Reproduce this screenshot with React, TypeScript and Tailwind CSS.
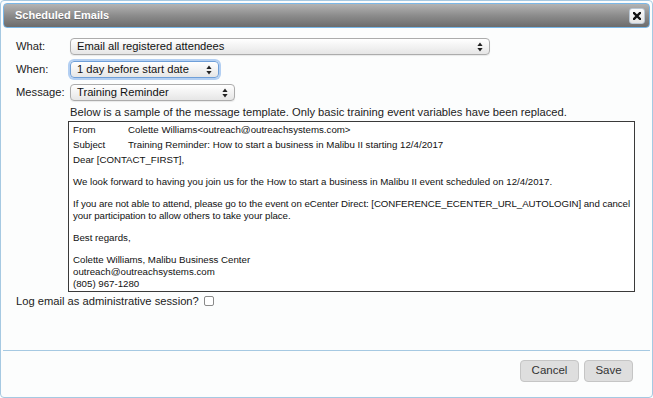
const font = { fontFamily: '"Liberation Sans", Arial, sans-serif' };

const Arrows = () => (
  <svg width="6" height="10" viewBox="0 0 6 10" className="shrink-0">
    <path d="M3 0.5 L5.6 4 L0.4 4 Z" fill="#222" />
    <path d="M3 9.5 L5.6 6 L0.4 6 Z" fill="#222" />
  </svg>
);

const FakeSelect = ({ value, width, focused }: { value: string; width: string; focused?: boolean }) => (
  <div
    className={`${width} h-[17px] flex items-center justify-between pl-[6px] pr-[6px] rounded-[4px] border text-[11.2px] text-[#111] bg-gradient-to-b from-[#ffffff] to-[#e6e6e6] ${
      focused
        ? "border-[#6f9fd8] shadow-[0_0_0_2px_#b3cff2]"
        : "border-[#acacac] shadow-[0_1px_1px_rgba(0,0,0,0.08)]"
    }`}
  >
    <span className="leading-none">{value}</span>
    <Arrows />
  </div>
);

export default function App() {
  return (
    <div className="w-[653px] h-[398px] bg-white" style={font}>
      <div className="h-full flex flex-col border border-[#a6c9e2] rounded-[4px] bg-[#fcfdfd] p-[2px]">
        {/* title bar */}
        <div className="h-[25px] shrink-0 flex items-center justify-between rounded-[4px] border border-[#79b7e7] bg-gradient-to-b from-[#b4b4b4] via-[#8c8c8c] to-[#6c6c6c] pl-[11px] pr-[4px]">
          <span className="text-[11px] font-bold text-white [text-shadow:0_1px_0_rgba(0,0,0,0.25)]">
            Scheduled Emails
          </span>
          <div className="w-[16px] h-[16px] flex items-center justify-center rounded-[3px] border border-[#b9c6d3] bg-gradient-to-b from-[#fbfbfb] to-[#e4e4e4]">
            <svg width="8" height="8" viewBox="0 0 8 8">
              <path d="M1 1 L7 7 M7 1 L1 7" stroke="#111" strokeWidth="2.4" strokeLinecap="square" />
            </svg>
          </div>
        </div>

        {/* content */}
        <div className="flex-1 pt-[10px] pl-[13px] text-[#222]">
          <div className="grid grid-cols-[54px_1fr] gap-y-[6px] items-center text-[11.2px]">
            <span>What:</span>
            <FakeSelect value="Email all registered attendees" width="w-[420px]" />
            <span>When:</span>
            <FakeSelect value="1 day before start date" width="w-[149px]" focused />
            <span>Message:</span>
            <FakeSelect value="Training Reminder" width="w-[165px]" />
          </div>

          <div className="pl-[54px] mt-[4px] text-[11.2px] leading-[14px]">
            Below is a sample of the message template. Only basic training event variables have been replaced.
          </div>

          <div className="ml-[52px] mt-[2px] w-[567px] h-[171px] border border-[#3a3a3a] bg-white pl-[4px] pt-[1px] text-[9.7px] text-[#111] overflow-hidden">
            <div className="flex h-[15px] items-center">
              <span className="w-[55px]">From</span>
              <span>Colette Williams&lt;outreach@outreachsystems.com&gt;</span>
            </div>
            <div className="flex h-[15px] items-center">
              <span className="w-[55px]">Subject</span>
              <span>Training Reminder: How to start a business in Malibu II starting 12/4/2017</span>
            </div>
            <div className="leading-[12px] mt-[1px]">
              <p>Dear [CONTACT_FIRST],</p>
              <p className="mt-[10px]">
                We look forward to having you join us for the How to start a business in Malibu II event scheduled on 12/4/2017.
              </p>
              <p className="mt-[10px] tracking-[-0.06px]">
                If you are not able to attend, please go to the event on eCenter Direct: [CONFERENCE_ECENTER_URL_AUTOLOGIN] and cancel your participation to allow others to take your place.
              </p>
              <p className="mt-[10px]">Best regards,</p>
              <p className="mt-[10px]">
                Colette Williams, Malibu Business Center
                <br />
                outreach@outreachsystems.com
                <br />
                (805) 967-1280
              </p>
            </div>
          </div>

          <div className="mt-[2px] h-[14px] flex items-center gap-[5px] text-[11.2px]">
            <span>Log email as administrative session?</span>
            <span className="w-[10px] h-[10px] rounded-[2px] border border-[#8a8a8a] bg-white" />
          </div>
        </div>

        {/* footer */}
        <div className="shrink-0 border-t border-[#a6c9e2] pt-[9px] pb-[13px] pr-[17px] flex justify-end gap-[5px]">
          <button className="w-[59px] h-[22px] rounded-[4px] border border-[#c5c5c5] bg-[#dedede] text-[11.5px] text-[#333]">
            Cancel
          </button>
          <button className="w-[49px] h-[22px] rounded-[4px] border border-[#c5c5c5] bg-[#dedede] text-[11.5px] text-[#333]">
            Save
          </button>
        </div>
      </div>
    </div>
  );
}
